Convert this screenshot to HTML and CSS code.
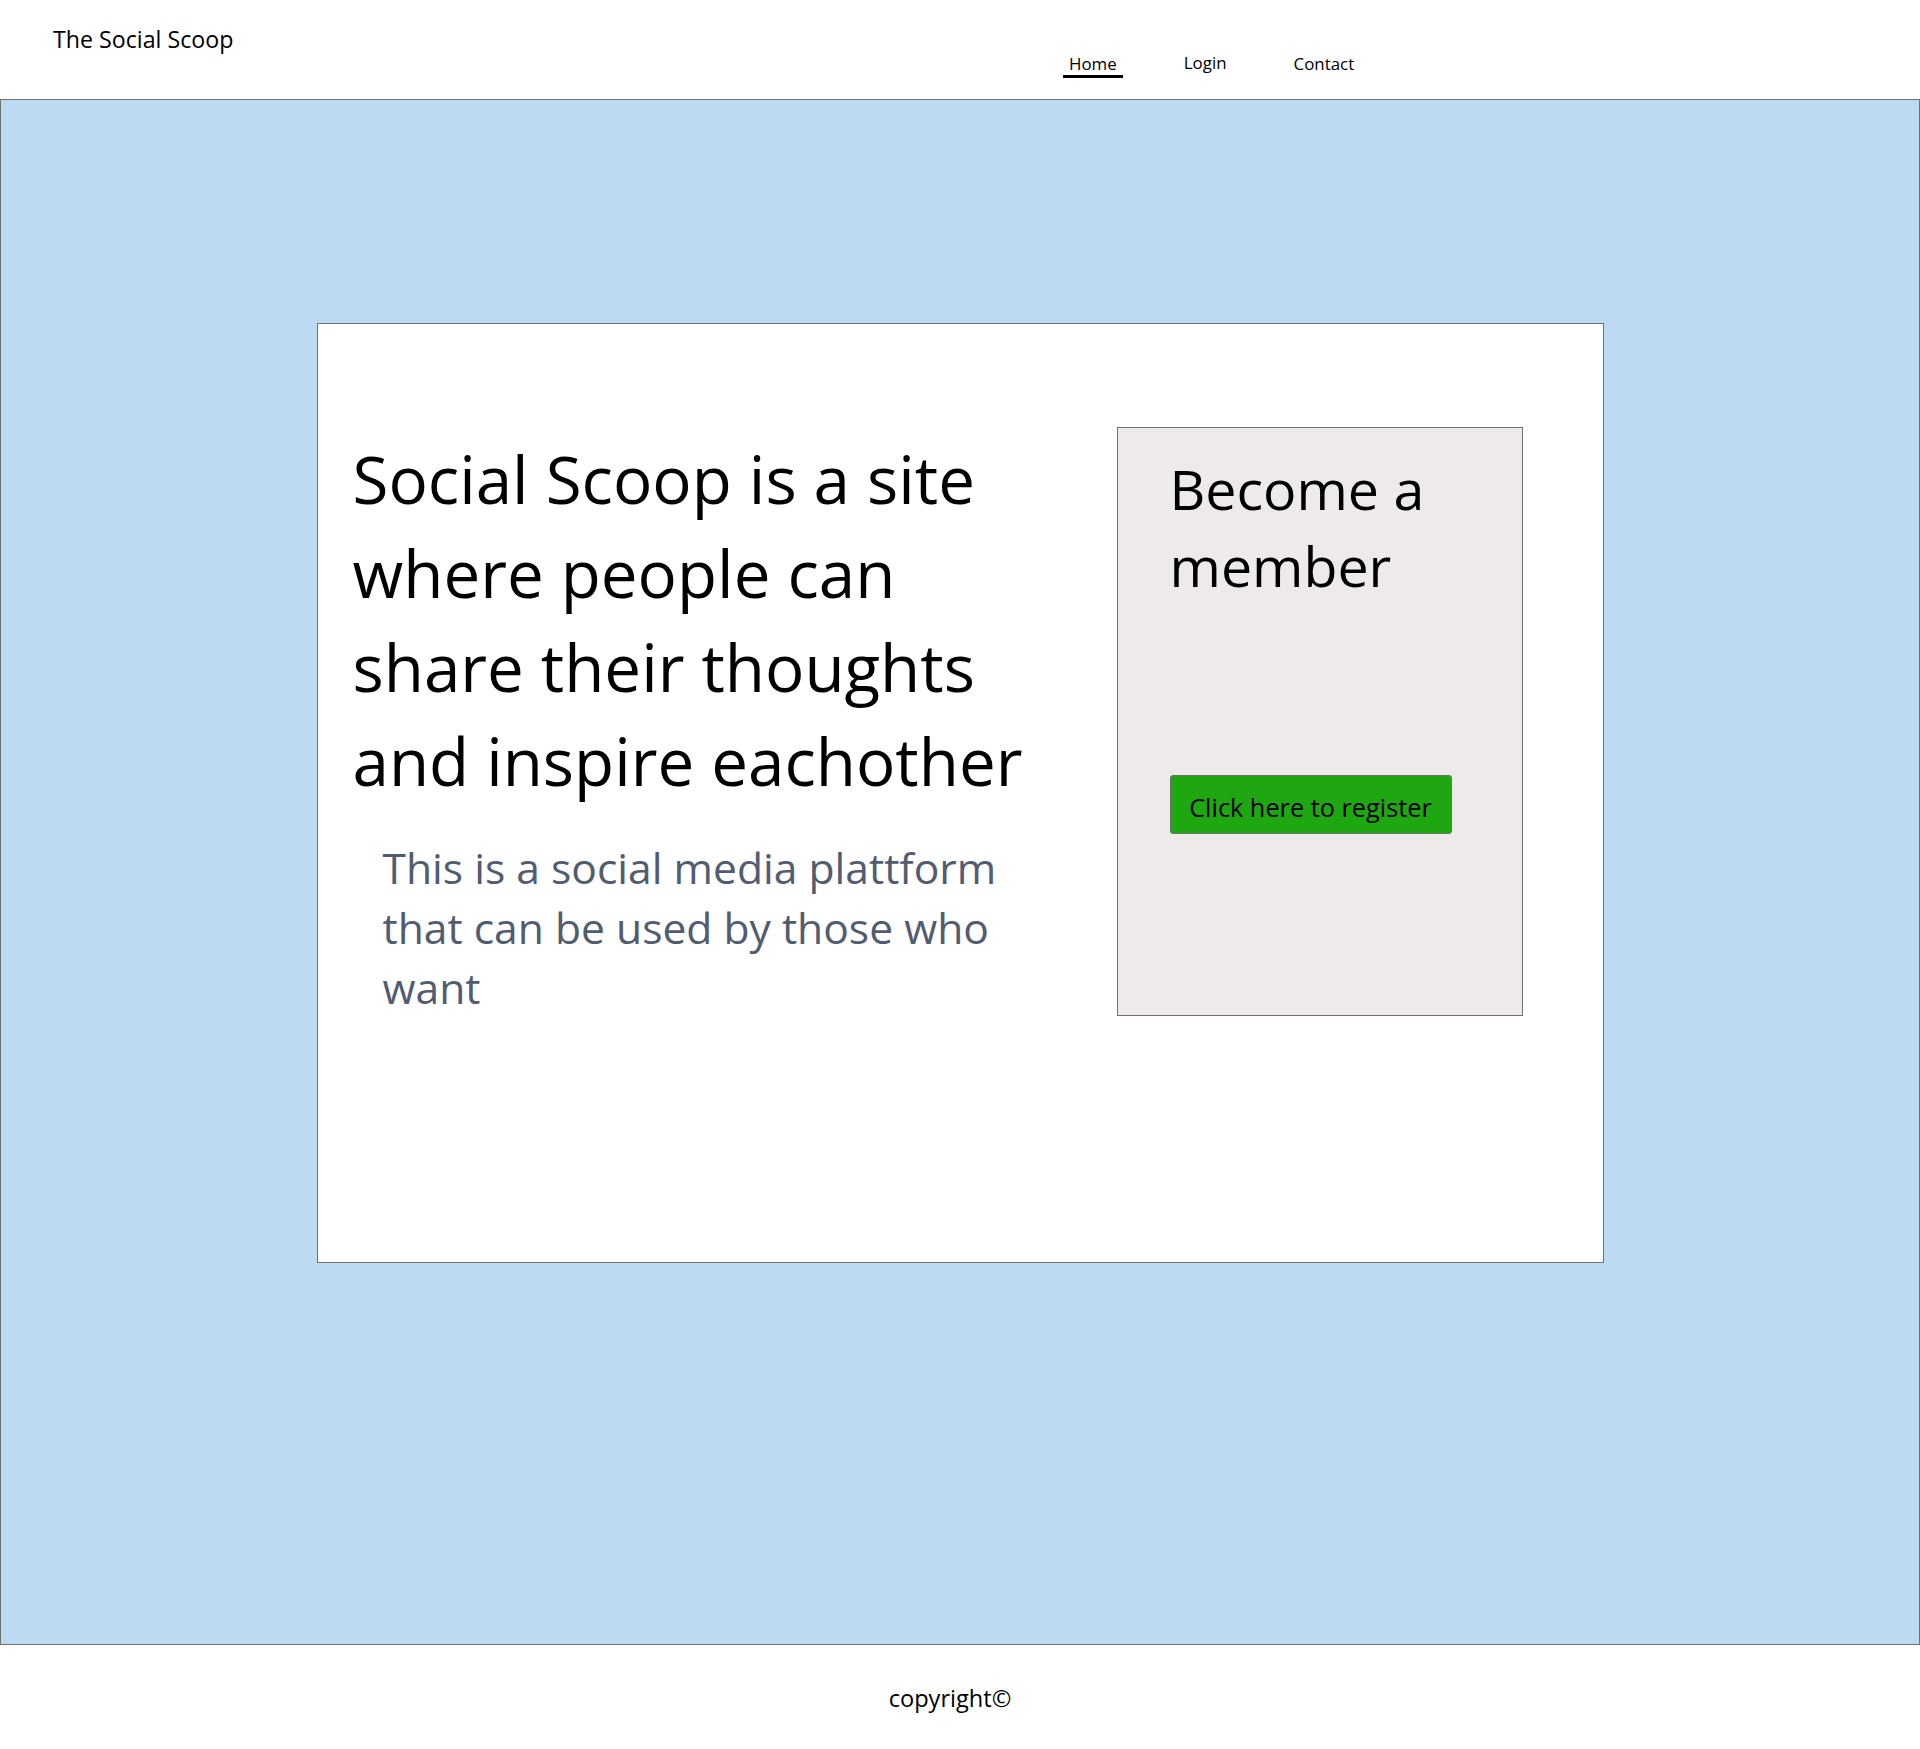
FILE: index.html
```html
<!DOCTYPE html>
<html lang="en">
<head>
<meta charset="utf-8">
<title>The Social Scoop</title>
<link rel="stylesheet" href="styles.css">
</head>
<body>
<header class="site-header">
  <div class="logo">The Social Scoop</div>
  <nav class="nav">
    <a class="nav-link active" href="#">Home</a>
    <a class="nav-link login" href="#">Login</a>
    <a class="nav-link" href="#">Contact</a>
  </nav>
</header>
<main class="hero">
  <section class="card">
    <div class="intro">
      <h1 class="headline">Social Scoop is a site where people can share their thoughts and inspire eachother</h1>
      <p class="lead">This is a social media plattform that can be used by those who want</p>
    </div>
    <aside class="join">
      <h2 class="join-title">Become a member</h2>
      <a class="register" href="#">Click here to register</a>
    </aside>
  </section>
</main>
<footer class="site-footer">copyright©</footer>
</body>
</html>
```
FILE: styles.css
```css
* { box-sizing: border-box; }
body {
  margin: 0;
  font-family: "Segoe UI", "Open Sans", "Noto Sans", sans-serif;
  color: #000;
  background: #fff;
}
.site-header {
  height: 99px;
  display: grid;
  grid-template-columns: 1063px 1fr;
}
.logo {
  padding: 24px 0 0 53px;
  font-size: 23.2px;
  line-height: 30px;
}
.nav {
  display: flex;
  align-items: flex-start;
  gap: 55px;
  padding-top: 53px;
}
.nav-link {
  color: #000;
  text-decoration: none;
  font-size: 16.9px;
  line-height: 22px;
  padding: 0 6px;
  border-bottom: 3px solid transparent;
}
.nav-link.login { margin-top: -1px; }
.nav-link.active { border-bottom-color: #000; }

.hero {
  background: #bddaf3;
  border: 1px solid #707070;
  padding: 223px 0 381px;
}
.card {
  width: 1287px;
  height: 940px;
  margin: 0 auto;
  background: #fff;
  border: 1px solid #707070;
  padding-top: 103px;
  display: grid;
  grid-template-columns: 799px 406px;
  align-items: start;
}
.intro {
  padding: 5px 0 0 35px;
}
.headline {
  margin: 0;
  width: 700px;
  font-weight: normal;
  font-size: 65.5px;
  line-height: 94px;
}
.lead {
  margin: 29px 0 0 30px;
  width: 660px;
  color: #525c71;
  font-size: 42.6px;
  line-height: 60px;
}
.join {
  height: 589px;
  background: #eeeae9;
  border: 1px solid #707070;
  padding: 22px 0 0 52px;
}
.join-title {
  margin: 0;
  width: 320px;
  font-weight: normal;
  font-size: 55.5px;
  line-height: 77px;
}
.register {
  display: block;
  margin: 171px 0 0 0;
  width: 282px;
  height: 59px;
  padding-top: 5px;
  background: #1fa712;
  border: 1px solid #707070;
  border-radius: 3px;
  color: #000;
  text-decoration: none;
  text-align: center;
  font-size: 25.3px;
  line-height: 52px;
}
.site-footer {
  height: 104px;
  padding: 38px 20px 0 0;
  text-align: center;
  font-size: 23.6px;
  line-height: 30px;
}
```
